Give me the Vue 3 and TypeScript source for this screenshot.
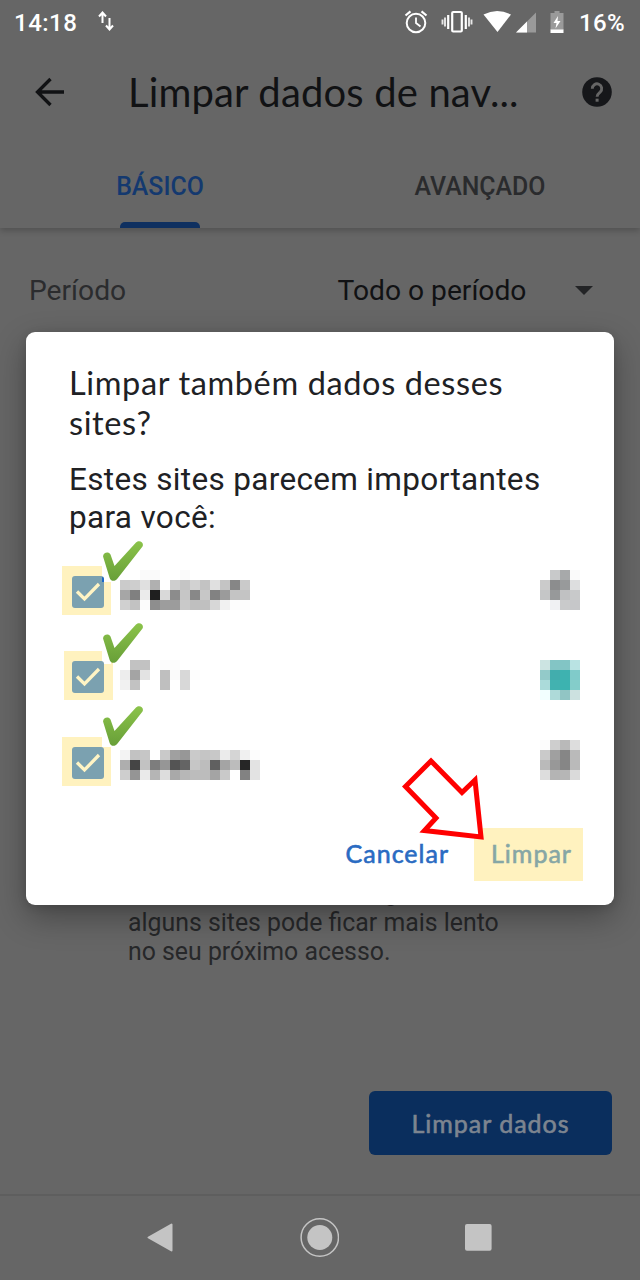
<script setup lang="ts">
interface Site {
  id: number
  checked: boolean
  label: string[]
  icon: string[]
}

const shades = (rows: string): string[] => rows.trim().split(/\s+/).map((c) => '#' + c)

const sites: Site[] = [
  {
    id: 1,
    checked: true,
    label: shades(`
      fff fff fafafa fafafa fff fff fafafa fff fff fff fff fff fff fff
      cbcbcb cecece e0e0e0 b0b0b0 fff cecece c4c4c4 d2d2d2 c3c3c3 e0e0e0 c4c4c4 868686 cacaca fff
      a6a6a6 808080 ebebeb 1f1f1f d9d9d9 8c8c8c c6c6c6 888888 c7c7c7 828282 9b9b9b c4c4c4 c4c4c4 fff
      d0d0d0 c2c2c2 fcfcfc 8e8e8e 9d9d9d 9c9c9c c9c9c9 bfbfbf c0c0c0 d7d7d7 f1f1f1 fdfdfd fdfdfd fff`),
    icon: shades(`
      fff c8c9ca a7a9aa fafafa
      cbcbcb 8c8d8e 989a9b dddedf
      c5c6c7 97999a c0c1c2 c8c9ca
      fff f0f1f3 c9cacb c6c7c9`),
  },
  {
    id: 2,
    checked: true,
    label: shades(`
      fff c2c2c2 c2c2c2 fff fcfcfc fcfcfc fff fff fff fff fff fff fff fff
      ededed a4a4a4 e3e3e3 fff bfbfbf fafafa d8d8d8 fdfdfd fff fff fff fff fff fff
      f1f1f1 c2c2c2 fff fff bfbfbf fff d8d8d8 fff fff fff fff fff fff fff`),
    icon: shades(`
      cce4e2 83c5c5 82c5c5 b9e3e3
      93cac9 42adad 3eb2b0 80cbca
      abdbda 42b2b0 3cb3b0 84cdca
      f2ffff aedad9 91c5c4 cce1e0`),
  },
  {
    id: 3,
    checked: true,
    label: shades(`
      f3f3f3 c2c2c2 c6c6c6 fff c9c9c9 a0a0a0 979797 cacaca c5c5c5 c8c8c8 ebebeb d5d5d5 f0f0f0 fdfdfd
      aeaeae 454545 c2c2c2 7d7d7d 969696 545454 646464 c6c6c6 bdbdbd 606060 a4a4a4 bcbcbc 262626 e3e3e3
      cecece 959595 eaeaea b5b5b5 dddddd a9a9a9 b7b7b7 bcbcbc bcbcbc a4a4a4 c9c9c9 fff 828282 e3e3e3`),
    icon: shades(`
      fcfcfc cecece b9b9b9 dddddd
      cacaca a0a0a0 868686 bababa
      bababa 989898 868686 bababa
      dddddd b4b4b4 b6b6b6 dadada`),
  },
]
</script>

<template>
  <main class="screen">
    <header class="status">
      <span class="clock">14:18</span>
      <svg class="sync" viewBox="0 0 16 20">
        <path d="M4.500 12V2.500M1 5.500 4.500 1.500 8 5.500M11.500 7v10M8 14.500l3.500 4 3.500-4" fill="none" stroke="#fff" stroke-width="2" />
      </svg>
      <svg class="tray" viewBox="0 0 162 26">
        <g fill="none" stroke="#fff">
          <circle cx="13" cy="14" r="9.300" stroke-width="2" />
          <path d="M13 8.500V14l4.500 3.500" stroke-width="1.800" />
          <path d="M2.500 6.500 7.500 2.300M23.500 6.500 18.500 2.300" stroke-width="2.200" />
          <rect x="49.200" y="3" width="9.600" height="19.500" rx="1" stroke-width="2.200" />
          <path d="M45.200 6v14M62.800 6v14" stroke-width="2.200" />
          <path d="M42 8.500v9M39.500 10.500v5M66 8.500v9M68.500 10.500v5" stroke-width="1.900" opacity=".85" />
        </g>
        <path d="M80.500 5.500Q94 -1.500 108 5.500L94.500 23Z" fill="#fff" />
        <path d="M133 3.500V23.500H113Z" fill="#9a9a9a" />
        <path d="M124 12.500V23.500H113Z" fill="#fff" />
        <path d="M151.500 2h5v2H160.500v17h-13V4h4Z" fill="#9a9a9a" />
        <path d="M147.500 20.500h13V24h-13ZM155 7l-4.500 7h3l-1 5.500 5-7.500h-3Z" fill="#fff" />
      </svg>
      <span class="battery">16%</span>
    </header>

    <div class="appbar">
      <svg class="back" viewBox="0 0 30 30">
        <path d="M29 15H3M15.500 2 2.500 15l13 13" fill="none" stroke="#111214" stroke-width="3.300" />
      </svg>
      <h1>Limpar dados de nav...</h1>
      <svg class="help" viewBox="0 0 30 30">
        <circle cx="15" cy="15" r="14.800" fill="#16171a" />
        <path d="M10.300 11.800a4.700 4.700 0 1 1 7.800 3.300c-1.800 1.500-3 2.200-3 4.700" fill="none" stroke="#666" stroke-width="2.900" />
        <rect x="13.600" y="21.700" width="3" height="3" fill="#666" />
      </svg>
    </div>

    <nav class="tabs">
      <span class="tab active"><b>BÁSICO</b></span>
      <span class="tab"><b>AVANÇADO</b></span>
    </nav>

    <section class="period">
      <span class="period-name">Período</span>
      <span>Todo o período</span>
      <i class="caret"></i>
    </section>

    <p class="note">
      <span class="first">g</span>
      <span>alguns sites pode ficar mais lento<br />no seu próximo acesso.</span>
    </p>
    <button class="primary"><span>Limpar dados</span></button>

    <footer class="navbar">
      <svg viewBox="0 0 40 40"><path d="M8.500 19.500 31.500 6.500V32.500Z" fill="#c4c4c4" stroke="#c4c4c4" stroke-width="2" stroke-linejoin="round" /></svg>
      <svg viewBox="0 0 40 40">
        <circle cx="20.800" cy="19.500" r="18.700" fill="none" stroke="#c4c4c4" stroke-width="1.500" />
        <circle cx="20.800" cy="19.500" r="12.500" fill="#c4c4c4" />
      </svg>
      <svg viewBox="0 0 40 40"><rect x="7" y="6" width="26.600" height="26.800" rx="2" fill="#c4c4c4" /></svg>
    </footer>

    <section class="dialog" role="dialog">
      <h2>Limpar também dados desses<br />sites?</h2>
      <p class="message">Estes sites parecem importantes<br />para você:</p>
      <ul class="sites">
        <li v-for="site in sites" :key="site.id" :class="'site s' + site.id">
          <span class="mark">
            <svg v-if="site.checked" class="box" viewBox="0 0 32 32">
              <rect width="32" height="32" rx="3" fill="#7ba1b0" />
              <path v-if="site.id === 1" d="M30 1q2 0 2 2v3h-2Z" fill="#1a67c8" />
              <path d="M5 15.500 12.500 23 27 8" fill="none" stroke="#fff4c4" stroke-width="3.300" />
            </svg>
            <svg class="tick" viewBox="0 0 42 42">
              <defs>
                <linearGradient :id="'leaf' + site.id" x1="0" y1="0" x2="0" y2="1">
                  <stop offset="0" stop-color="#8bc34a" />
                  <stop offset="1" stop-color="#689f38" />
                </linearGradient>
              </defs>
              <path
                d="M1.200 17C.2 13.500 6 10.500 8.500 14.500L12.500 26 34 2.500C37-.5 42.500 2 40.500 6.500L15.500 38.500C13 42 8.500 41.500 7.500 37.500Z"
                :fill="`url(#leaf${site.id})`"
              />
            </svg>
          </span>
          <span class="mosaic label">
            <i v-for="(c, i) in site.label" :key="i" :style="{ background: c }"></i>
          </span>
          <span class="mosaic icon">
            <i v-for="(c, i) in site.icon" :key="i" :style="{ background: c }"></i>
          </span>
        </li>
      </ul>
      <div class="actions">
        <button class="cancel"><span>Cancelar</span></button>
        <button class="confirm"><span>Limpar</span></button>
      </div>
      <svg class="pointer" viewBox="0 0 90 90">
        <path d="M31 4 62 35.500 75 23 81 80 24.500 73.500 36 61 5.500 29.500Z" fill="#fff" stroke="#f00" stroke-width="5" />
      </svg>
    </section>
  </main>
</template>

<style>
body {
  margin: 0;
  background: #666;
}
</style>

<style scoped>
.screen {
  position: relative;
  display: flex;
  flex-direction: column;
  width: 640px;
  height: 1280px;
  overflow: hidden;
  background: #666;
  font-family: Roboto, sans-serif;
  color: #111214;
}
svg { display: block; flex: none; }
h1, h2, p, ul { margin: 0; padding: 0; }
button { border: 0; padding: 0; background: none; font: inherit; white-space: nowrap; }
span { white-space: nowrap; }

.status {
  display: flex;
  align-items: center;
  box-sizing: border-box;
  height: 46px;
  padding: 0 15px 1px 14px;
  color: #fff;
  font-size: 24px;
  font-weight: 500;
}
.clock { width: 84px; letter-spacing: 0.5px; }
.sync { width: 16px; height: 20px; margin-top: -3px; }
.tray { width: 162px; height: 26px; margin: -2px 14px 0 auto; }
.battery { width: 46px; letter-spacing: 0.3px; }

.appbar {
  display: flex;
  align-items: center;
  height: 94px;
  padding: 0 28px 0 35px;
}
.back { width: 30px; height: 30px; margin: -2px 63px 0 0; }
h1 {
  flex: 1;
  margin-top: -2px;
  font: 400 40px/50px Lato, sans-serif;
  letter-spacing: 0.150px;
  white-space: nowrap;
}
.help { width: 30px; height: 30px; margin-top: -2px; }

.tabs {
  display: grid;
  grid-template-columns: 1fr 1fr;
  height: 88px;
  box-shadow: 0 3px 6px rgba(0, 0, 0, 0.2);
  clip-path: inset(0 0 -14px 0);
}
.tab {
  display: flex;
  flex-direction: column;
  align-items: center;
  justify-content: space-between;
  padding-top: 33px;
  color: #2a2b2d;
  font-size: 24.900px;
  line-height: 28px;
}
.tab b { font-weight: 500; }
.active { color: #14396f; }
.active::after {
  content: '';
  width: 80px;
  height: 6px;
  border-radius: 5px 5px 0 0;
  background: #0f3060;
}

.period {
  display: flex;
  align-items: center;
  height: 40px;
  margin-top: 42px;
  margin-bottom: 1px;
  padding: 0 47px 0 29px;
  font-size: 28.200px;
}
.period-name { width: 308.500px; color: #2b2c2e; }
.caret {
  margin-left: auto;
  border: 9px solid transparent;
  border-top-color: #232426;
  border-bottom: 0;
}

.note {
  display: flex;
  flex-direction: column;
  margin-top: 566px;
  padding-left: 128px;
  color: #27282a;
  font-size: 24.850px;
  line-height: 29.500px;
}
.note span { position: relative; top: 1px; }
.first { padding-left: 256px; }
.primary {
  align-self: flex-end;
  width: 243px;
  height: 64px;
  margin: 125.500px 28px 0 0;
  border-radius: 6px;
  background: #0a2e5d;
  color: #7d8590;
  font: 400 25px/60px Lato, sans-serif;
  letter-spacing: 1px;
  -webkit-text-stroke: 0.600px;
}
.navbar {
  display: flex;
  align-items: center;
  justify-content: space-between;
  box-sizing: border-box;
  height: 86px;
  margin-top: auto;
  padding: 0 142px 0 140px;
  border-top: 2px solid #5e5e5e;
}
.navbar svg { width: 40px; height: 40px; }

.dialog {
  position: absolute;
  left: 26px;
  top: 332px;
  box-sizing: border-box;
  width: 588px;
  height: 573px;
  padding: 31px 31px 24px 42px;
  border-radius: 9px;
  background: #fff;
  color: #202124;
  box-shadow: 0 12px 32px rgba(0, 0, 0, 0.32), 0 2px 8px rgba(0, 0, 0, 0.12);
}
h2 { padding-left: 1px; font: 400 32.500px/40px Lato, sans-serif; letter-spacing: 0.620px; white-space: nowrap; }
.message { margin-top: 18px; padding-left: 1px; font-size: 31.500px; line-height: 37.500px; letter-spacing: 0.330px; white-space: nowrap; }

.sites { list-style: none; margin: 30px 0 0 -6px; }
.site {
  display: flex;
  align-items: flex-start;
  height: 85.500px;
}
.mark {
  position: relative;
  width: 49px;
  height: 49px;
  margin: 0 9px 0 0;
  background: #fff2bf;
}
.mark::before {
  content: '';
  position: absolute;
  left: 40px;
  top: 0;
  width: 9px;
  height: 16px;
  background: #fff;
}
.box { position: absolute; left: 10px; top: 10px; width: 32px; height: 32px; }
.tick { position: absolute; left: 40px; top: -26px; width: 42px; height: 42px; }
.mosaic { display: grid; grid-auto-rows: 10px; }
.label { grid-template-columns: repeat(14, 10px); }
.icon { grid-template-columns: repeat(4, 10px); margin-left: 280px; }
.s1 .label { margin-top: 4px; }
.s1 .icon { margin-top: 4px; }
.s2 .mark { left: 2px; top: -0.500px; }
.s2 .mark::before { left: 38px; height: 13px; }
.s2 .box { left: 8px; }
.s2 .tick { left: 38px; top: -29px; }
.s2 .label { margin-top: 8.500px; }
.s2 .icon { margin-top: 8.500px; }
.s3 .mark::before { height: 10px; }
.s3 .tick { top: -32px; }
.s3 .label { margin-top: 13px; }
.s3 .icon { margin-top: 3px; }

.actions {
  position: absolute;
  right: 31px;
  bottom: 24px;
  display: flex;
  gap: 25px;
  font: 400 25px/51px Lato, sans-serif;
  letter-spacing: 1px;
  -webkit-text-stroke: 0.600px;
}
.actions button { letter-spacing: inherit; }
.actions span { display: block; height: 53px; }
.cancel { color: #2a6bc2; }
.confirm { width: 109px; height: 53px; padding-left: 6px; background: #fff2bf; color: #86a6a5; }
.pointer { position: absolute; left: 374px; top: 425px; width: 90px; height: 90px; }
</style>
